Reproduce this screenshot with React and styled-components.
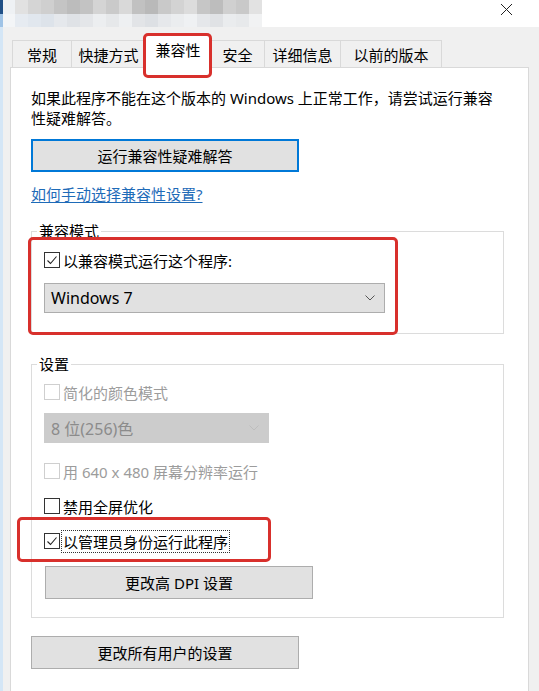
import React from 'react';
import styled, { createGlobalStyle } from 'styled-components';

const GlobalStyle = createGlobalStyle`
  html, body {
    margin: 0;
    padding: 0;
  }
  body {
    background: #f0f0f0;
    font-family: "Noto Sans", "Noto Sans CJK SC", sans-serif;
    font-size: 15px;
    color: #000;
  }
`;

const Window = styled.div`
  position: relative;
  width: 539px;
  height: 691px;
  overflow: hidden;
  background: #f0f0f0;
  box-shadow: inset 3px 0 0 #d4e6f6;
`;

const TitleBar = styled.div`
  display: flex;
  height: 27px;
`;

const Mosaic = styled.div`
  width: 262px;
  display: grid;
  grid-template-columns: 3px 12px repeat(19, 13px);
  grid-template-rows: 14px 13px;
`;

const Cell = styled.div`
  background: ${p => p.$c};
`;

const TitleFill = styled.div`
  flex: 1;
  background: #fff;
  display: flex;
  justify-content: flex-end;
  padding: 3px 26px 0 0;
`;

const TabStrip = styled.div`
  position: relative;
  z-index: 1;
  display: flex;
  align-items: flex-end;
  height: 41px;
  margin-bottom: -1px;
  padding-left: 13px;
`;

const Tab = styled.div`
  box-sizing: border-box;
  width: ${p => p.$w + 1}px;
  height: ${p => (p.$active ? 34 : 28)}px;
  margin-left: -1px;
  display: flex;
  align-items: center;
  justify-content: center;
  padding-bottom: ${p => (p.$active ? 4 : 0)}px;
  background: ${p => (p.$active ? '#fff' : '#f0f0f0')};
  border: 1px solid #d9d9d9;
  border-bottom: ${p => (p.$active ? '1px solid #fff' : '1px solid #d9d9d9')};
  position: relative;
  z-index: ${p => (p.$active ? 2 : 1)};
  white-space: nowrap;
`;

const Panel = styled.div`
  margin: 0 10px;
  min-height: 700px;
  background: #fff;
  border: 1px solid #d9d9d9;
  padding: 20px 24px 0 20px;
`;

const Description = styled.p`
  margin: 0;
  line-height: 20px;
`;

const Button = styled.button`
  display: block;
  box-sizing: border-box;
  width: 268px;
  height: 33px;
  margin: ${p => p.$mt}px 0 0 ${p => p.$ml || 0}px;
  padding: 0;
  background: #e1e1e1;
  border: ${p => (p.$focused ? '2px solid #0078d7' : '1px solid #adadad')};
  font: inherit;
  font-size: 15px;
  color: #000;
`;

const HelpLink = styled.a`
  display: block;
  width: fit-content;
  margin-top: 12px;
  line-height: 20px;
  color: #1e6bb8;
  text-decoration: underline;
  text-underline-offset: 2px;
`;

const Group = styled.fieldset`
  box-sizing: border-box;
  width: 473px;
  min-width: 0;
  margin: ${p => p.$mt}px 0 0;
  padding: ${p => p.$pt}px 12px ${p => p.$pb}px 12px;
  border: 1px solid #dcdcdc;
`;

const Legend = styled.legend`
  margin-left: -7px;
  padding: 0 2px;
  line-height: 20px;
  font-size: 15px;
`;

const CheckRow = styled.label`
  display: flex;
  align-items: center;
  gap: 3px;
  height: 20px;
  margin-top: ${p => p.$mt || 0}px;
  color: ${p => (p.$disabled ? '#9c9c9c' : '#000')};
  white-space: nowrap;
`;

const Box = styled.span`
  box-sizing: border-box;
  width: 16px;
  height: 16px;
  display: flex;
  align-items: center;
  justify-content: center;
  border: 1px solid ${p => (p.$disabled ? '#cfcfcf' : '#333')};
  background: #fff;
`;

const FocusText = styled.span`
  outline: 1px dotted #333;
  outline-offset: 0;
  padding: 0 1px;
  margin-left: -1px;
`;

const Select = styled.div`
  box-sizing: border-box;
  width: ${p => p.$w}px;
  height: ${p => p.$h}px;
  margin-top: ${p => p.$mt}px;
  display: flex;
  align-items: center;
  justify-content: space-between;
  padding: 0 9px 0 6px;
  background: ${p => (p.$disabled ? '#cccccc' : '#e1e1e1')};
  border: 1px solid ${p => (p.$disabled ? '#cccccc' : '#adadad')};
  color: ${p => (p.$disabled ? '#8b8b8b' : '#000')};
  font-size: 16px;
`;

const Highlight = styled.div`
  position: absolute;
  box-sizing: border-box;
  left: ${p => p.$x}px;
  top: ${p => p.$y}px;
  width: ${p => p.$w}px;
  height: ${p => p.$h}px;
  border: 3px solid #d8302c;
  border-radius: 5px;
  pointer-events: none;
  z-index: 5;
`;

const topRow = [
  '#1f4f86', '#eef1f4', '#e1e1e1', '#d5d5d5', '#cfcfcf', '#c4c4c4', '#bcbcbc',
  '#c3c3c3', '#d4d4d4', '#cacaca', '#d9d9d9', '#c1c1c1', '#b9b9b9', '#c9c9c9',
  '#d3d3d3', '#dcdcdc', '#c6c6c6', '#bdbdbd', '#d0d0d0', '#c9c9c9', '#e2e2e2',
];
const bottomRow = [
  '#9fc3e6', '#f3f5f7', '#e6ebf1', '#e1e7ee', '#dde3ea', '#e5e8ec', '#dfe2e6',
  '#e4e6e9', '#eceef0', '#e6e8ea', '#eef0f2', '#e2e4e7', '#dde0e4', '#e6e8eb',
  '#ebedef', '#eff1f3', '#e5e7ea', '#e0e2e5', '#eaecee', '#e7e9eb', '#f1f2f3',
];

const tabs = [
  { label: '常规', w: 59 },
  { label: '快捷方式', w: 74 },
  { label: '兼容性', w: 65, active: true },
  { label: '安全', w: 54 },
  { label: '详细信息', w: 76 },
  { label: '以前的版本', w: 101 },
];

const CloseIcon = () => (
  <svg width="13" height="13" viewBox="0 0 13 13">
    <path d="M1 1 L12 12 M12 1 L1 12" stroke="#222" strokeWidth="1" fill="none" />
  </svg>
);

const Chevron = ({ color }) => (
  <svg width="10" height="6" viewBox="0 0 10 6">
    <path d="M0.5 0.5 L5 5 L9.5 0.5" stroke={color} strokeWidth="1" fill="none" />
  </svg>
);

const Check = ({ checked, disabled, children, mt, focused }) => (
  <CheckRow $mt={mt} $disabled={disabled}>
    <Box $disabled={disabled}>
      {checked && (
        <svg width="14" height="14" viewBox="0 0 14 14">
          <path d="M2.5 7.5 L5.5 10.5 L11.5 3.5" stroke="#222" strokeWidth="1.1" fill="none" />
        </svg>
      )}
    </Box>
    {focused ? <FocusText>{children}</FocusText> : <span>{children}</span>}
  </CheckRow>
);

export default function App() {
  return (
    <Window>
      <GlobalStyle />
      <TitleBar>
        <Mosaic>
          {topRow.map((c, i) => <Cell key={'t' + i} $c={c} />)}
          {bottomRow.map((c, i) => <Cell key={'b' + i} $c={c} />)}
        </Mosaic>
        <TitleFill>
          <CloseIcon />
        </TitleFill>
      </TitleBar>

      <TabStrip>
        {tabs.map(t => (
          <Tab key={t.label} $w={t.w} $active={t.active}>{t.label}</Tab>
        ))}
      </TabStrip>

      <Panel>
        <Description>
          如果此程序不能在这个版本的 Windows 上正常工作，请尝试运行兼容
          <br />
          性疑难解答。
        </Description>
        <Button $mt={11} $focused>运行兼容性疑难解答</Button>
        <HelpLink>如何手动选择兼容性设置?</HelpLink>

        <Group $mt={17} $pt={9} $pb={20}>
          <Legend>兼容模式</Legend>
          <Check checked>以兼容模式运行这个程序:</Check>
          <Select $w={341} $h={30} $mt={13}>
            <span>Windows 7</span>
            <Chevron color="#555" />
          </Select>
        </Group>

        <Group $mt={20} $pt={8} $pb={18}>
          <Legend>设置</Legend>
          <Check disabled>简化的颜色模式</Check>
          <Select $w={225} $h={30} $mt={11} $disabled>
            <span>8 位(256)色</span>
            <Chevron color="#bdbdbd" />
          </Select>
          <Check disabled mt={18}>用 640 x 480 屏幕分辨率运行</Check>
          <Check mt={15}>禁用全屏优化</Check>
          <Check checked focused mt={15}>以管理员身份运行此程序</Check>
          <Button $mt={15} $ml={1}>更改高 DPI 设置</Button>
        </Group>

        <Button $mt={18}>更改所有用户的设置</Button>
      </Panel>

      <Highlight $x={143} $y={33} $w={69} $h={45} />
      <Highlight $x={28} $y={237} $w={370} $h={98} />
      <Highlight $x={17} $y={517} $w={254} $h={45} />
    </Window>
  );
}
